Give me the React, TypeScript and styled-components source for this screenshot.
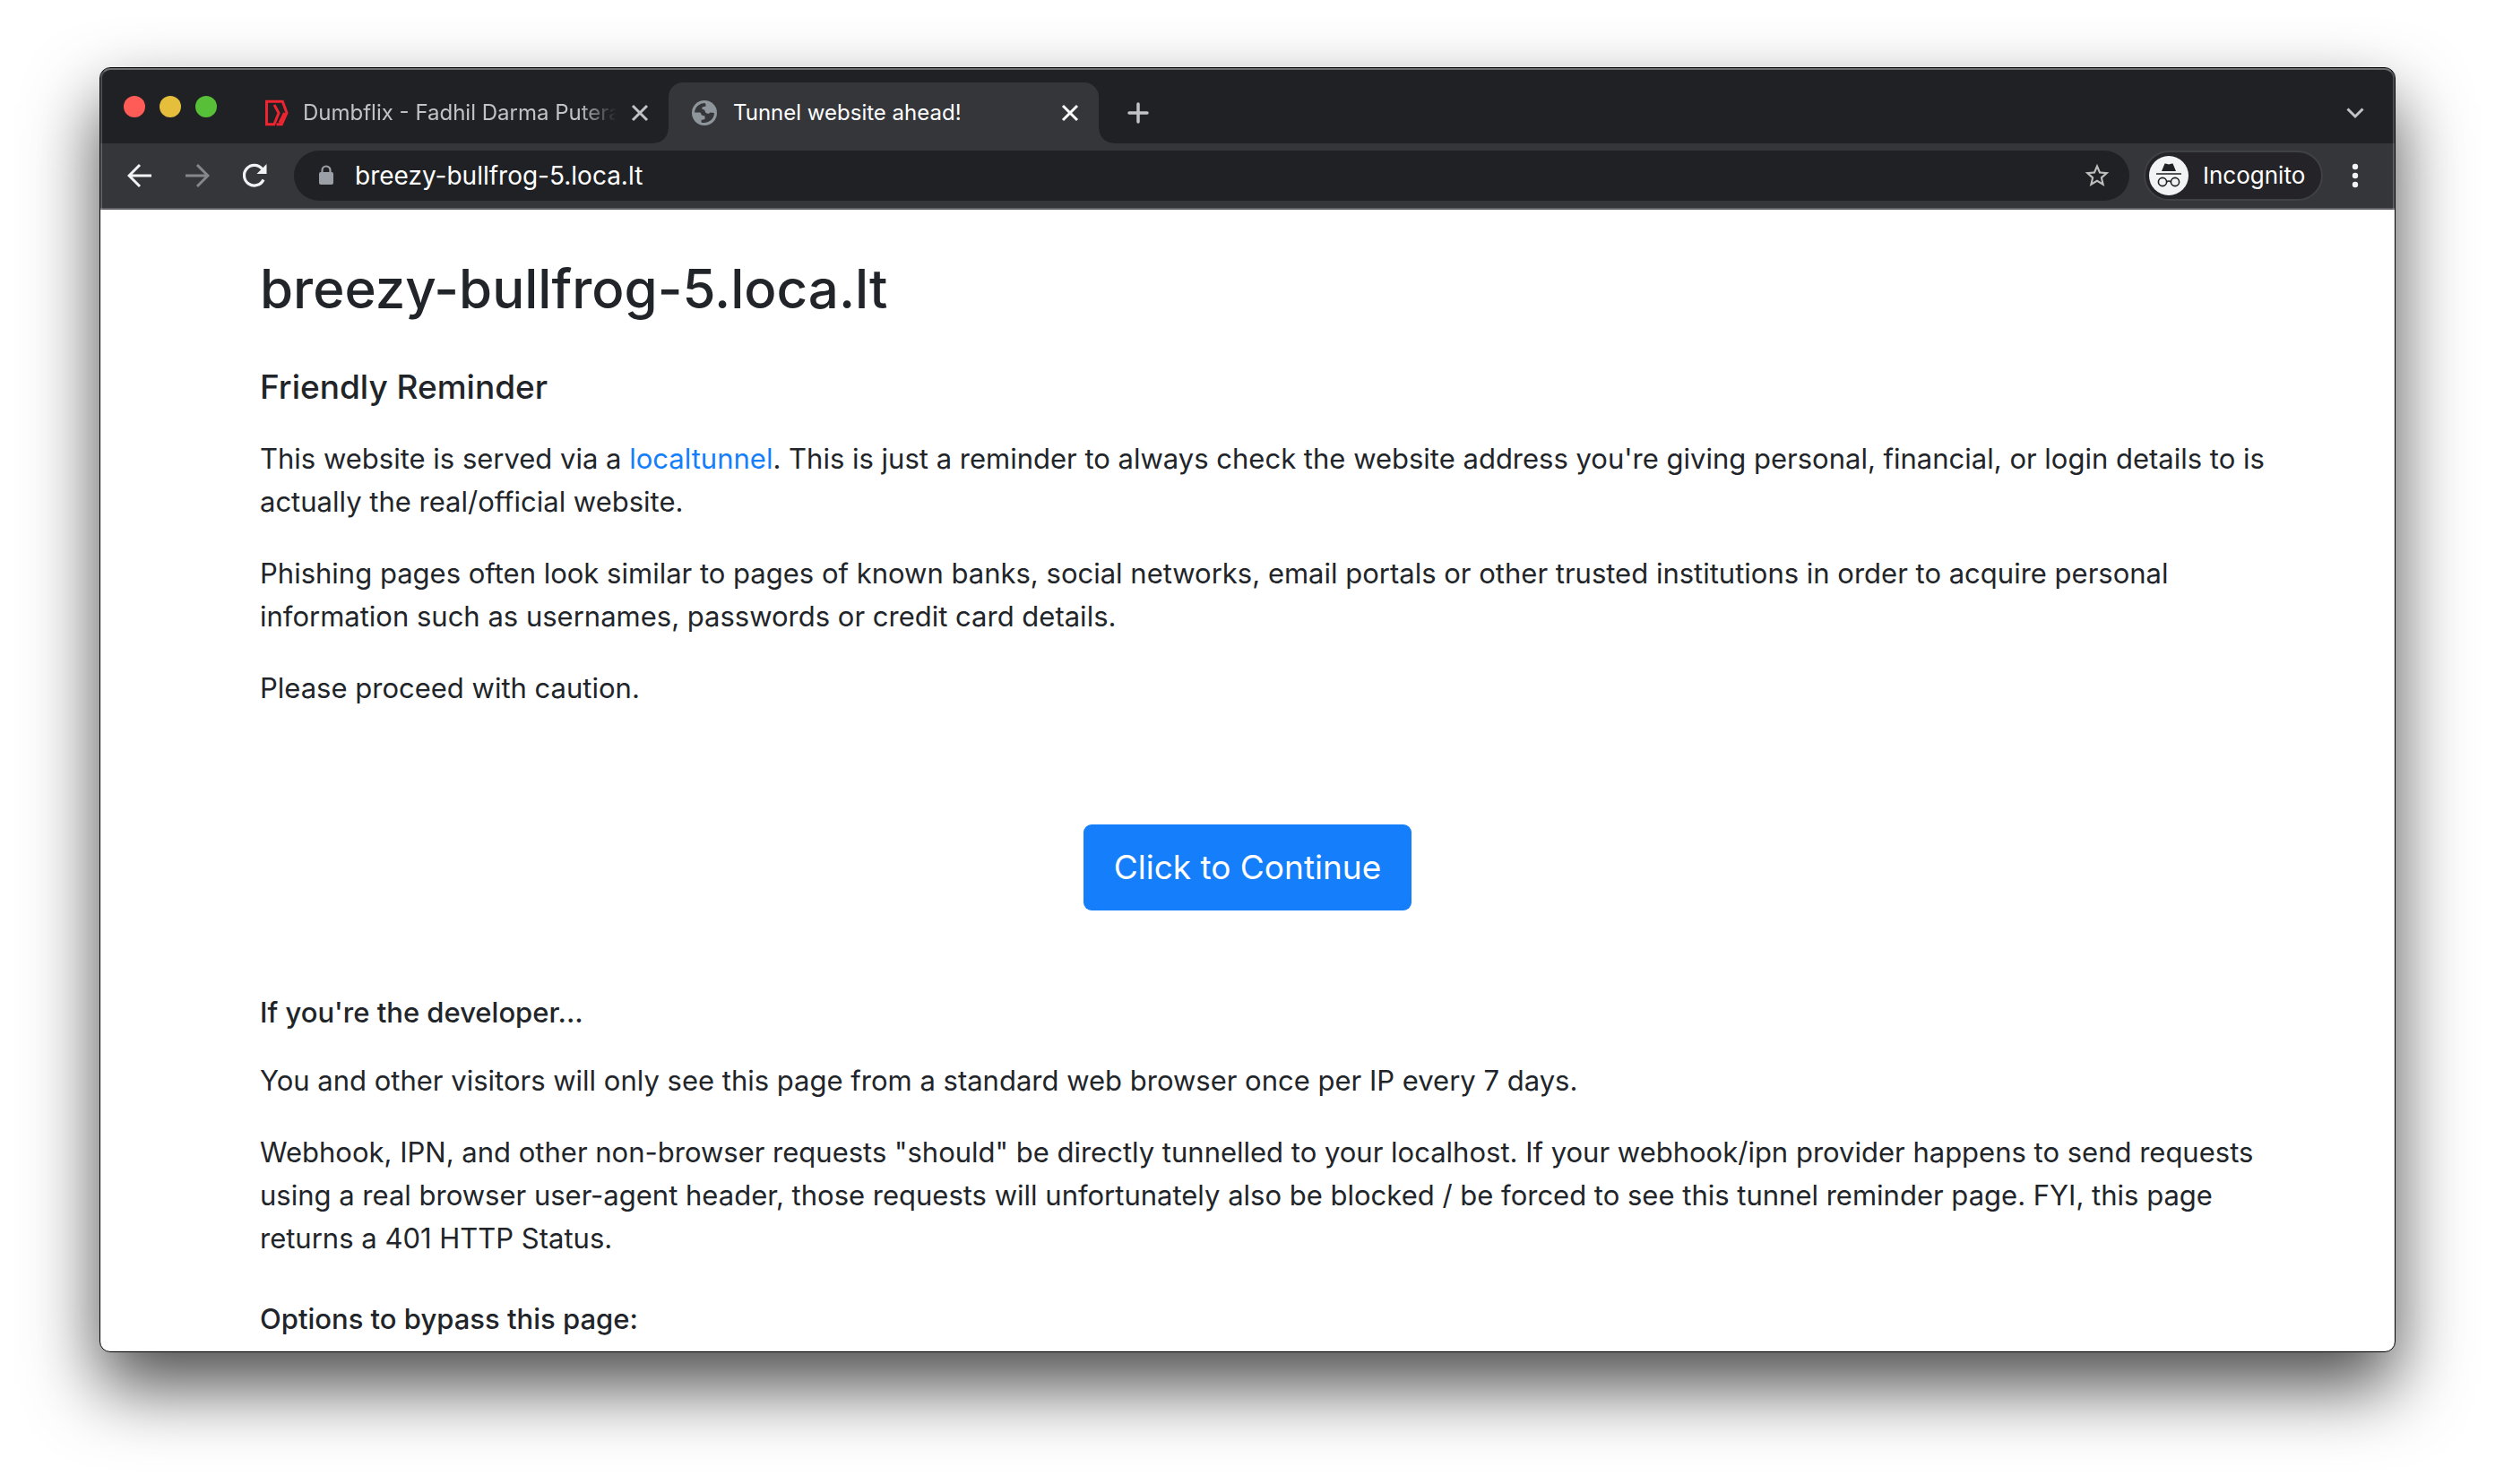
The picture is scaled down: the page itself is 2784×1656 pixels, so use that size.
import React from 'react';
import styled, { createGlobalStyle, css } from 'styled-components';

const GlobalStyle = createGlobalStyle`
  *, *::before, *::after { box-sizing: border-box; }
  body {
    margin: 0;
    background: #fff;
    color: #212529;
    font-family: Inter, "Liberation Sans", sans-serif;
    -webkit-font-smoothing: antialiased;
  }
  button, input { font-family: inherit; }
`;

const Desktop = styled.div`
  height: 100vh;
  padding: 75px 111px 147px;
  overflow: hidden;
`;

const BrowserWindow = styled.div`
  height: 100%;
  display: flex;
  flex-direction: column;
  border: 1px solid #000;
  border-radius: 12px;
  overflow: hidden;
  background: #fff;
  box-shadow: 0 38px 80px rgba(0, 0, 0, 0.7);
`;

const Chrome = styled.header`
  position: relative;
  flex: none;
  background: #35363a;
  border-bottom: 2px solid #5f6064;

  &::after {
    content: '';
    position: absolute;
    inset: 0 0 -2px;
    border: 2px solid rgba(255, 255, 255, 0.2);
    border-top-color: rgba(255, 255, 255, 0.35);
    border-bottom: 0;
    border-radius: 11px 11px 0 0;
    pointer-events: none;
  }
`;

const TabStrip = styled.div`
  display: flex;
  align-items: flex-end;
  height: 84px;
  padding: 2px 28px 0 26px;
  background: #202124;
`;

const Lights = styled.div`
  display: flex;
  gap: 16px;
  align-self: center;
  margin-right: 24px;
`;

const Light = styled.button<{ $color: string }>`
  width: 24px;
  height: 24px;
  padding: 0;
  border: 0;
  border-radius: 50%;
  background: ${({ $color }) => $color};
`;

const Tab = styled.div<{ $active?: boolean }>`
  position: relative;
  display: flex;
  align-items: center;
  gap: 16px;
  width: 480px;
  height: 68px;
  padding: 0 22px 0 24px;
  color: #c1c3c6;
  ${({ $active }) =>
    $active &&
    css`
      color: #fff;
      background: #35363a;
      border-radius: 16px 16px 0 0;

      &::before,
      &::after {
        content: '';
        position: absolute;
        bottom: 0;
        width: 16px;
        height: 16px;
      }
      &::before {
        right: 100%;
        background: radial-gradient(circle at 0 0, #202124 15px, #35363a 16px);
      }
      &::after {
        left: 100%;
        background: radial-gradient(circle at 100% 0, #202124 15px, #35363a 16px);
      }
    `}
`;

const TabTitle = styled.span<{ $faded?: boolean }>`
  flex: 1;
  min-width: 0;
  overflow: hidden;
  white-space: nowrap;
  font-size: 24px;
  line-height: 32px;
  ${({ $faded }) =>
    $faded && css`mask-image: linear-gradient(90deg, #000 88%, transparent);`}
`;

const IconButton = styled.button<{ $size?: number; $color?: string }>`
  display: flex;
  flex: none;
  align-items: center;
  justify-content: center;
  width: ${({ $size = 32 }) => $size}px;
  height: ${({ $size = 32 }) => $size}px;
  padding: 0;
  border: 0;
  background: none;
  color: ${({ $color = 'inherit' }) => $color};
`;

const StripEnd = styled.div`
  display: flex;
  flex: 1;
  align-items: center;
  justify-content: space-between;
  height: 68px;
  padding-left: 28px;
`;

const Toolbar = styled.div`
  display: flex;
  align-items: center;
  height: 72px;
  padding: 0 28px;
`;

const NavButtons = styled.div`
  display: flex;
  gap: 32px;
  margin-right: 28px;
`;

const Omnibox = styled.label`
  display: flex;
  flex: 1;
  align-items: center;
  gap: 16px;
  height: 56px;
  padding: 0 20px;
  border-radius: 28px;
  background: #202124;
`;

const Address = styled.input`
  flex: 1;
  min-width: 0;
  padding: 0;
  border: 0;
  outline: 0;
  background: none;
  color: #fff;
  font-size: 28px;
  line-height: 36px;
`;

const Profile = styled.button`
  display: flex;
  align-items: center;
  gap: 16px;
  width: 200px;
  height: 56px;
  margin: 0 20px 0 16px;
  padding: 0 4px;
  border: 2px solid #404145;
  border-radius: 28px;
  background: #242428;
  color: #fff;
  font-size: 26px;
  line-height: 36px;
`;

const Page = styled.main`
  flex: 1;
  min-height: 0;
  padding: 48px 138px 0 178px;
  overflow: hidden;
`;

const Title = styled.h1`
  margin: 0 0 46px;
  font-size: 60px;
  font-weight: 500;
  line-height: 80px;
`;

const Heading = styled.h4`
  margin: 0 0 32px;
  font-size: 37px;
  font-weight: 500;
  line-height: 48px;
`;

const Subheading = styled.h5`
  margin: 46px 0 32px;
  font-size: 31px;
  font-weight: 500;
  line-height: 40px;
`;

const Text = styled.p`
  margin: 0 0 32px;
  font-size: 31px;
  line-height: 48px;
`;

const Link = styled.a`
  color: #157efb;
  text-decoration: none;
`;

const Action = styled.div`
  display: flex;
  justify-content: center;
  padding: 96px 40px 48px 0;
`;

const ContinueButton = styled.button`
  height: 96px;
  padding: 0 34px;
  border: 0;
  border-radius: 9px;
  background: #157efb;
  color: #fff;
  font-size: 37px;
  line-height: 60px;
`;

const DumbflixIcon = () => (
  <svg width="32" height="32" viewBox="0 0 32 32" fill="none" stroke="#ee2430" strokeWidth="3">
    <path d="M17 28.700H7.500V3.300H25.300L30 16l-5.700 12.700H18.500" />
    <path d="M16 7l5 9-5 12.500" />
    <path d="M27.500 16l-5.500 11" />
  </svg>
);

const GlobeIcon = () => (
  <svg width="32" height="32" viewBox="0 0 32 32">
    <circle cx="16" cy="16" r="14" fill="#8e959b" />
    <path
      d="M5 15.500A11.200 11.200 0 0 1 16.500 5l1 1.500v2l-4 1v2.500l2.500.5 1.500 3.500 3 1 2-1.500 4.500.5A11.200 11.200 0 0 1 12.500 26.500v-2.500l4-1v-3.500l-3.500-1-1.500-3z"
      fill="#35363a"
    />
  </svg>
);

const CloseIcon = () => (
  <svg width="20" height="20" viewBox="0 0 20 20" fill="none" stroke="currentColor" strokeWidth="3">
    <path d="M2 2l16 16M18 2L2 18" />
  </svg>
);

const PlusIcon = () => (
  <svg width="24" height="24" viewBox="0 0 24 24" fill="none" stroke="currentColor" strokeWidth="3.500" strokeLinecap="round">
    <path d="M12 2v20M2 12h20" />
  </svg>
);

const ChevronIcon = () => (
  <svg width="20" height="14" viewBox="0 0 20 14" fill="none" stroke="currentColor" strokeWidth="3">
    <path d="M1.500 2.500l8.500 8.500 8.500-8.500" />
  </svg>
);

const ArrowIcon = ({ forward }: { forward?: boolean }) => (
  <svg width="28" height="28" viewBox="0 0 28 28" fill="none" stroke="currentColor" strokeWidth="3">
    <path d={forward ? 'M1 14h24M14 2l12 12-12 12' : 'M27 14H3M14 2L2 14l12 12'} />
  </svg>
);

const ReloadIcon = () => (
  <svg width="32" height="32" viewBox="0 0 32 32" fill="none">
    <path d="M26 20.500A11.300 11.300 0 1 1 24.500 8.500" stroke="currentColor" strokeWidth="3.200" />
    <path d="M29.500 3v11h-11z" fill="currentColor" />
  </svg>
);

const LockIcon = () => (
  <svg width="32" height="32" viewBox="0 0 32 32">
    <path d="M11.500 13V10a4.500 4.500 0 0 1 9 0v3" fill="none" stroke="#9aa0a6" strokeWidth="2.200" />
    <rect x="8" y="12" width="16" height="14" rx="2" fill="#9aa0a6" />
  </svg>
);

const StarIcon = () => (
  <svg width="36" height="36" viewBox="0 0 24 24" fill="#bdbdbd">
    <path d="M22 9.240l-7.190-.62L12 2 9.190 8.630 2 9.240l5.460 4.730L5.820 21 12 17.270 18.180 21l-1.630-7.030L22 9.240zM12 15.400l-3.760 2.270 1-4.280-3.320-2.880 4.380-.38L12 6.100l1.710 4.040 4.380.38-3.320 2.880 1 4.280L12 15.400z" />
  </svg>
);

const IncognitoIcon = () => (
  <svg width="44" height="44" viewBox="0 0 44 44">
    <circle cx="22" cy="22" r="22" fill="#f1f3f4" />
    <path d="M14 17l3.500-8.500 2 .2 2.500.8 2.500-.8 2-.2L30 17z" fill="#202124" />
    <path d="M8 20h28" stroke="#202124" strokeWidth="1.600" />
    <g fill="none" stroke="#202124" strokeWidth="1.600">
      <circle cx="15" cy="29" r="4.600" />
      <circle cx="29" cy="29" r="4.600" />
      <path d="M19.600 29c1.600-1.300 3.200-1.300 4.800 0" />
    </g>
  </svg>
);

const MoreIcon = () => (
  <svg width="8" height="28" viewBox="0 0 8 28" fill="currentColor">
    <circle cx="4" cy="4" r="3.200" />
    <circle cx="4" cy="14" r="3.200" />
    <circle cx="4" cy="24" r="3.200" />
  </svg>
);

const lights = [
  { name: 'Close window', color: '#ff5c57' },
  { name: 'Minimise window', color: '#e5bf3c' },
  { name: 'Zoom window', color: '#57c038' },
];

export default function App() {
  return (
    <Desktop>
      <GlobalStyle />
      <BrowserWindow>
        <Chrome>
          <TabStrip>
            <Lights>
              {lights.map(({ name, color }) => (
                <Light key={name} aria-label={name} $color={color} />
              ))}
            </Lights>
            <Tab>
              <DumbflixIcon />
              <TabTitle $faded>Dumbflix - Fadhil Darma Putera</TabTitle>
              <IconButton aria-label="Close tab" $size={20}><CloseIcon /></IconButton>
            </Tab>
            <Tab $active>
              <GlobeIcon />
              <TabTitle>Tunnel website ahead!</TabTitle>
              <IconButton aria-label="Close tab" $size={20}><CloseIcon /></IconButton>
            </Tab>
            <StripEnd>
              <IconButton aria-label="New tab" $color="#c1c3c6"><PlusIcon /></IconButton>
              <IconButton aria-label="Search tabs" $color="#c1c3c6"><ChevronIcon /></IconButton>
            </StripEnd>
          </TabStrip>
          <Toolbar>
            <NavButtons>
              <IconButton aria-label="Back" $color="#f1f3f4"><ArrowIcon /></IconButton>
              <IconButton aria-label="Forward" $color="#86878a"><ArrowIcon forward /></IconButton>
              <IconButton aria-label="Reload" $color="#f1f3f4"><ReloadIcon /></IconButton>
            </NavButtons>
            <Omnibox>
              <LockIcon />
              <Address aria-label="Address" defaultValue="breezy-bullfrog-5.loca.lt" />
              <IconButton aria-label="Bookmark this page"><StarIcon /></IconButton>
            </Omnibox>
            <Profile>
              <IncognitoIcon />
              Incognito
            </Profile>
            <IconButton aria-label="Menu" $color="#f1f3f4"><MoreIcon /></IconButton>
          </Toolbar>
        </Chrome>
        <Page>
          <Title>breezy-bullfrog-5.loca.lt</Title>
          <Heading>Friendly Reminder</Heading>
          <Text>
            This website is served via a <Link href="#localtunnel">localtunnel</Link>. This is just a
            reminder to always check the website address you're giving personal, financial, or login
            details to is actually the real/official website.
          </Text>
          <Text>
            Phishing pages often look similar to pages of known banks, social networks, email portals
            or other trusted institutions in order to acquire personal information such as usernames,
            passwords or credit card details.
          </Text>
          <Text>Please proceed with caution.</Text>
          <Action>
            <ContinueButton>Click to Continue</ContinueButton>
          </Action>
          <Subheading>If you're the developer...</Subheading>
          <Text>
            You and other visitors will only see this page from a standard web browser once per IP
            every 7 days.
          </Text>
          <Text>
            Webhook, IPN, and other non-browser requests "should" be directly tunnelled to your
            localhost. If your webhook/ipn provider happens to send requests using a real browser
            user-agent header, those requests will unfortunately also be blocked / be forced to see
            this tunnel reminder page. FYI, this page returns a 401 HTTP Status.
          </Text>
          <Subheading>Options to bypass this page:</Subheading>
        </Page>
      </BrowserWindow>
    </Desktop>
  );
}
